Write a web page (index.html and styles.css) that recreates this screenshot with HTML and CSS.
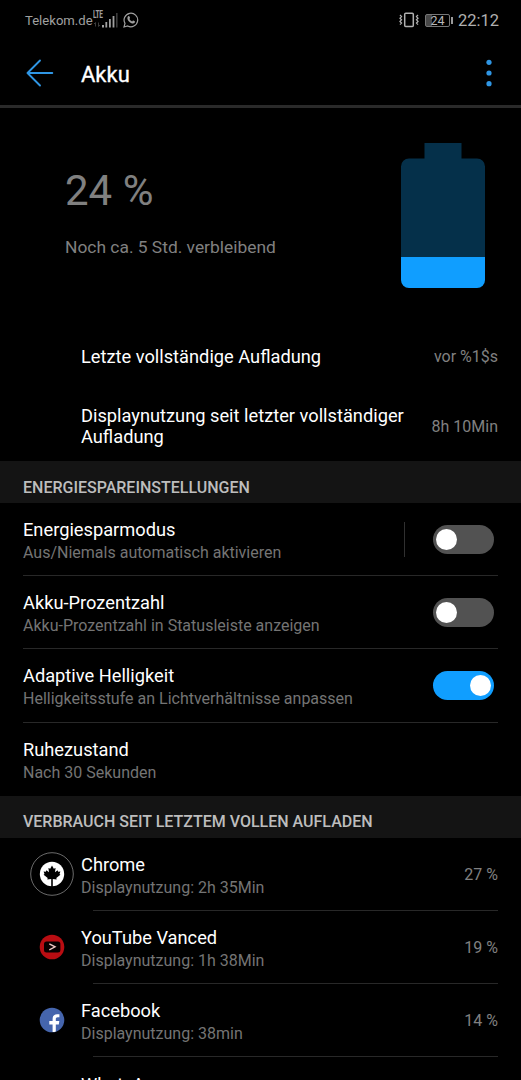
FILE: index.html
```html
<!DOCTYPE html>
<html lang="de">
<head>
  <meta charset="utf-8">
  <title>Akku</title>
  <meta name="viewport" content="width=device-width, initial-scale=1">
  <link rel="stylesheet" href="styles.css">
</head>
<body>
  <div class="statusbar">
    <span class="carrier">Telekom.de</span>
    <div class="signal">
      <span class="lte">LTE</span>
      <svg width="26" height="16" viewBox="0 0 26 16">
        <path d="M3.500 10.500v4M2 12l1.500-1.500M6.500 10.500v4l1.500-1.500" stroke="#3c3c3c" fill="none"/>
        <g fill="#a0a0a0">
          <rect x="10" y="13" width="2" height="2.500"/>
          <rect x="13.400" y="10" width="1.800" height="5.500"/>
          <rect x="17" y="7" width="1.800" height="8.500"/>
          <rect x="20.600" y="4" width="1.800" height="11.500"/>
        </g>
        <rect x="24" y="1" width="1.600" height="14.500" fill="#3c3c3c"/>
      </svg>
    </div>
    <svg class="whatsapp" width="16" height="16" viewBox="0 0 16 16">
      <path d="M1 15l1-3.600A6.800 6.800 0 1 1 4.700 14z" fill="none" stroke="#a0a0a0" stroke-width="1.200"/>
      <path d="M5.200 4.300c.6-.5 1-.4 1.300.2l.5 1.200c.1.4-.5.9-.6 1.200.6 1.200 1.500 2 2.700 2.500.4-.1.800-1 1.200-.8l1.400.7c.5.3.3 1-.1 1.500-.9.9-2.100.8-3.600.1-1.700-.8-3.100-2.400-3.500-3.900-.2-1.100 0-2 .7-2.700z" fill="#a0a0a0"/>
    </svg>
    <div class="status-right">
      <svg width="20" height="16" viewBox="0 0 20 16" fill="none" stroke="#b0b0b0">
        <rect x="5.700" y="1.200" width="8.600" height="13.400" rx="1" stroke-width="1.500"/>
        <path d="M1 3l1.500 1.600L1 6.200l1.500 1.600L1 9.400 2.500 11 1 12.600M19 3l-1.500 1.600L19 6.200l-1.500 1.600L19 9.400 17.500 11l1.500 1.600" stroke-width="1.300"/>
      </svg>
      <span class="mini-battery">24</span>
      <span class="clock">22:12</span>
    </div>
  </div>

  <header class="appbar">
    <svg width="28" height="28" viewBox="0 0 28 28" fill="none" stroke="#2f96e4" stroke-width="1.900" stroke-linecap="round" stroke-linejoin="round">
      <path d="M26.300 14H1.500M14 1.500L1.500 14 14 26.500"/>
    </svg>
    <h1>Akku</h1>
    <svg class="more" width="6" height="28" viewBox="0 0 6 28" fill="#2f96e4">
      <circle cx="3" cy="3.300" r="2.600"/>
      <circle cx="3" cy="14" r="2.600"/>
      <circle cx="3" cy="24.700" r="2.600"/>
    </svg>
  </header>

  <section class="summary">
    <div>
      <div class="percent">24 %</div>
      <div class="remaining">Noch ca. 5 Std. verbleibend</div>
    </div>
    <svg class="battery" width="84" height="145" viewBox="0 0 84 145">
      <path d="M23.500 0h37v15.500H76a8 8 0 0 1 8 8V114H0V23.500a8 8 0 0 1 8-8h15.500z" fill="#05304a"/>
      <path d="M0 114h84v23a8 8 0 0 1-8 8H8a8 8 0 0 1-8-8z" fill="#109eff"/>
    </svg>
  </section>

  <section class="usage">
    <div class="info">
      <div class="title">Letzte vollständige Aufladung</div>
      <div class="value">vor %1$s</div>
    </div>
    <div class="info tall">
      <div class="title">Displaynutzung seit letzter vollständiger Aufladung</div>
      <div class="value">8h 10Min</div>
    </div>
  </section>

  <h2>ENERGIESPAREINSTELLUNGEN</h2>
  <ul>
    <li>
      <div class="text">
        <div class="title">Energiesparmodus</div>
        <div class="sub">Aus/Niemals automatisch aktivieren</div>
      </div>
      <div class="separator"></div>
      <div class="switch"></div>
    </li>
    <li>
      <div class="text">
        <div class="title">Akku-Prozentzahl</div>
        <div class="sub">Akku-Prozentzahl in Statusleiste anzeigen</div>
      </div>
      <div class="switch"></div>
    </li>
    <li>
      <div class="text">
        <div class="title">Adaptive Helligkeit</div>
        <div class="sub">Helligkeitsstufe an Lichtverhältnisse anpassen</div>
      </div>
      <div class="switch on"></div>
    </li>
    <li>
      <div class="text">
        <div class="title">Ruhezustand</div>
        <div class="sub">Nach 30 Sekunden</div>
      </div>
    </li>
  </ul>

  <h2>VERBRAUCH SEIT LETZTEM VOLLEN AUFLADEN</h2>
  <ul class="apps">
    <li>
      <svg class="icon" width="44" height="44" viewBox="0 0 44 44">
        <circle cx="22" cy="22" r="21.300" fill="none" stroke="#777" stroke-width=".9"/>
        <circle cx="22" cy="22" r="12.200" fill="#fff"/>
        <path d="M22 13.500L23.800 16.800 25.600 16 25 20.200 27.600 18.200 28.200 19.700 30.400 19.400 29.500 22 30.400 22.800 26.300 26 26.700 27.600 22.800 27V35H21.200V27L17.300 27.600 17.700 26 13.600 22.800 14.500 22 13.600 19.400 15.800 19.700 16.400 18.200 19 20.200 18.400 16 20.200 16.800z" fill="#000"/>
      </svg>
      <div class="text">
        <div class="title">Chrome</div>
        <div class="sub">Displaynutzung: 2h 35Min</div>
      </div>
      <div class="value">27 %</div>
    </li>
    <li>
      <svg class="icon" width="44" height="44" viewBox="0 0 44 44">
        <circle cx="22" cy="22" r="12.300" fill="#b90d12"/>
        <rect x="14" y="16.500" width="16.400" height="11" rx="2.500" fill="#080000"/>
        <path d="M19.300 18.800l5.800 3-5.800 3" fill="none" stroke="#f0c8c4" stroke-width="1.300"/>
      </svg>
      <div class="text">
        <div class="title">YouTube Vanced</div>
        <div class="sub">Displaynutzung: 1h 38Min</div>
      </div>
      <div class="value">19 %</div>
    </li>
    <li>
      <svg class="icon" width="44" height="44" viewBox="0 0 44 44">
        <circle cx="22" cy="22" r="12.300" fill="#4565ad"/>
        <path d="M22.600 34v-7.600h-3.300v-3.300h3.300v-2.200c0-3.200 1.800-4.700 4.500-4.700h2.300v3h-1.700c-1.300 0-1.900.7-1.900 1.900v2h3.500l-.5 3.300h-3v7c-1 .4-2 .6-3.200.6z" fill="#fff"/>
      </svg>
      <div class="text">
        <div class="title">Facebook</div>
        <div class="sub">Displaynutzung: 38min</div>
      </div>
      <div class="value">14 %</div>
    </li>
    <li class="next">
      <div class="icon"></div>
      <div class="title">WhatsApp</div>
    </li>
  </ul>
</body>
</html>
```

FILE: styles.css
```css
* {
  box-sizing: border-box;
}

body {
  margin: 0;
  height: 1080px;
  overflow: hidden;
  background: #000;
  color: #fff;
  font-family: Roboto, sans-serif;
}

.statusbar {
  display: flex;
  align-items: center;
  height: 40px;
  padding: 0 22px 0 25px;
  color: #a0a0a0;
}

.carrier {
  width: 67px;
  font-size: 13.1px;
}

.signal {
  position: relative;
  width: 26px;
  height: 16px;
}

.signal svg {
  display: block;
}

.lte {
  position: absolute;
  top: -3px;
  left: 1px;
  font-size: 10px;
  font-weight: bold;
  line-height: 11px;
  letter-spacing: -0.5px;
  transform: scaleX(0.65);
  transform-origin: left;
}

.whatsapp {
  margin-left: 5px;
}

.status-right {
  display: flex;
  align-items: center;
  margin-left: auto;
}

.mini-battery {
  position: relative;
  width: 25px;
  height: 13px;
  margin: 0 8px 0 6px;
  border: 1px solid #777;
  border-radius: 2px;
  background: linear-gradient(to right, #484848 24%, #000 24%);
  color: #b8b8b8;
  font-size: 12.5px;
  line-height: 12px;
  text-align: center;
}

.mini-battery::after {
  content: "";
  position: absolute;
  top: 2px;
  right: -4px;
  width: 2px;
  height: 7px;
  background: #999;
}

.clock {
  font-size: 16.5px;
  color: #b0b0b0;
}

.appbar {
  display: flex;
  align-items: center;
  height: 68px;
  padding: 1px 29px 0 26px;
  border-bottom: 3px solid #2a2a2a;
}

h1 {
  margin: 0 auto 0 27px;
  padding-top: 3px;
  font-size: 22px;
  font-weight: 400;
  -webkit-text-stroke: 0.3px #fff;
}

.summary {
  display: flex;
  justify-content: space-between;
  height: 219px;
  padding: 35px 36px 0 65px;
}

.percent {
  margin-top: 23px;
  color: #808080;
  font-size: 42px;
  line-height: 50px;
}

.remaining {
  margin-top: 21px;
  color: #808080;
  font-size: 17.4px;
  line-height: 20px;
}

.usage {
  height: 134px;
}

.info {
  display: flex;
  align-items: center;
  justify-content: space-between;
  height: 59px;
  padding: 0 23px 0 81px;
}

.info.tall {
  height: 80px;
}

.title {
  font-size: 18.25px;
  line-height: 21.5px;
}

.value {
  flex: none;
  color: #808080;
  font-size: 16px;
}

h2 {
  height: 41.7px;
  margin: 0;
  padding: 16.5px 23px 0;
  background: #141414;
  color: #bdbdbd;
  font-size: 16px;
  font-weight: 500;
  line-height: 20px;
}

ul {
  margin: 0;
  padding: 0;
  list-style: none;
}

li {
  position: relative;
  display: flex;
  align-items: center;
  height: 73.3px;
  padding: 0 23px;
}

li:not(:last-child)::after {
  content: "";
  position: absolute;
  left: 23px;
  right: 23px;
  bottom: 0;
  height: 1px;
  background: #282828;
}

.text {
  flex: 1;
  padding-top: 2px;
}

.sub {
  margin-top: 2.5px;
  color: #747474;
  font-size: 16px;
  line-height: 19px;
}

.separator {
  width: 1px;
  height: 35px;
  margin-right: 28px;
  background: #303030;
}

.switch {
  width: 61px;
  height: 29px;
  margin-right: 4px;
  padding: 4px 3px;
  border-radius: 15px;
  background: #525252;
}

.switch::before {
  content: "";
  display: block;
  width: 21px;
  height: 21px;
  border-radius: 50%;
  background: #fff;
}

.switch.on {
  background: #109eff;
}

.switch.on::before {
  margin-left: auto;
}

.apps li {
  padding-left: 30px;
}

.apps li:not(:last-child)::after {
  left: 93px;
}

.apps .icon {
  width: 44px;
  margin: -1px 7px 0 0;
}

.apps .next {
  align-items: flex-start;
  padding-top: 16.5px;
}
```
